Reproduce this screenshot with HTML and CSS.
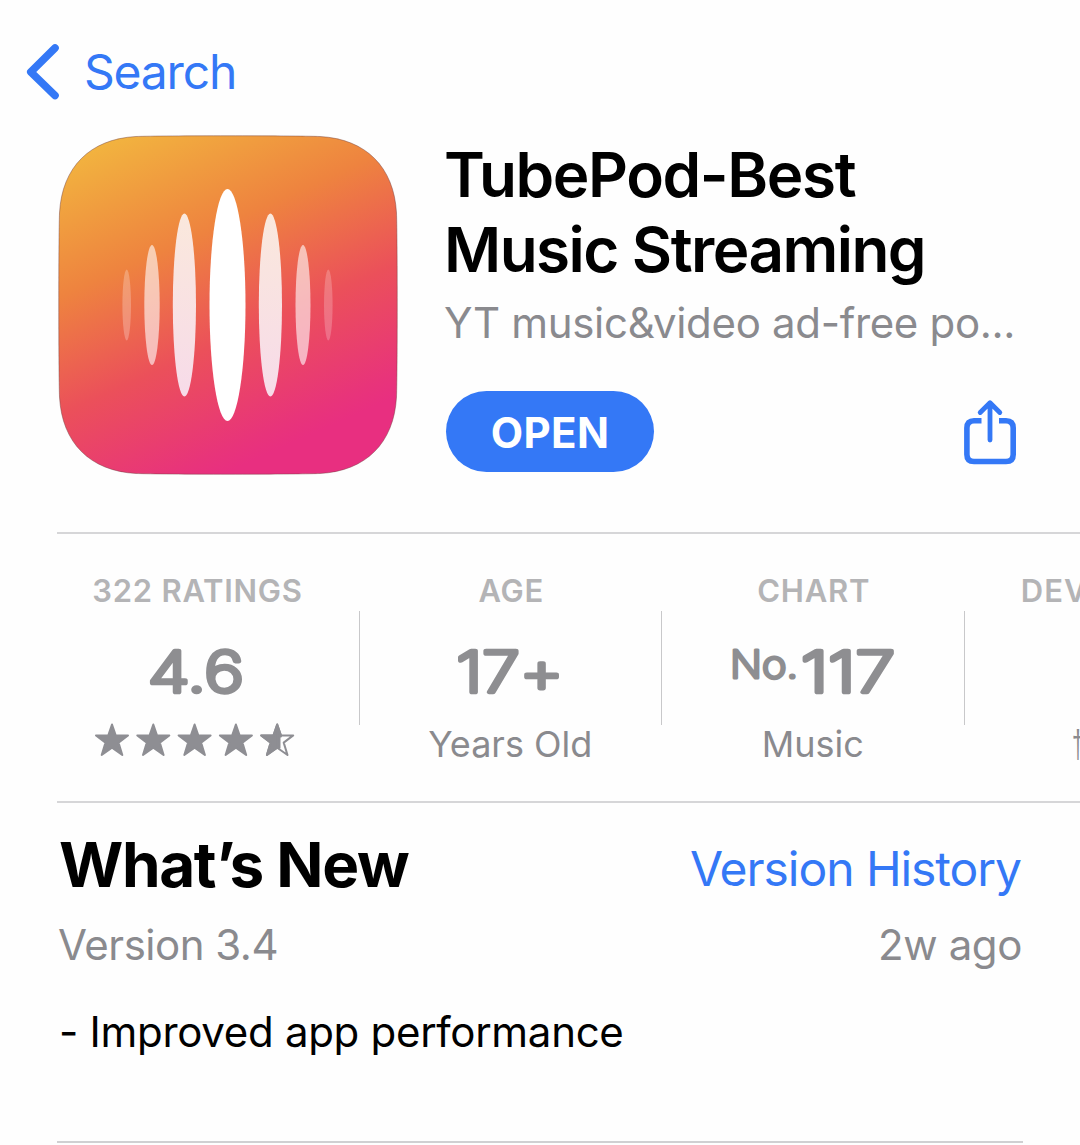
FILE: index.html
```html
<!DOCTYPE html>
<html lang="en">
<head>
<meta charset="utf-8">
<title>TubePod-Best Music Streaming</title>
<link rel="stylesheet" href="styles.css">
</head>
<body>
<nav class="nav">
  <svg class="chevron" width="36" height="58" viewBox="0 0 36 58"><path d="M30 6 5.800 30 30 53.500" fill="none" stroke="#3478f6" stroke-width="7.600" stroke-linecap="round" stroke-linejoin="round"/></svg>
  <a class="back">Search</a>
</nav>
<header class="app">
  <svg class="app-icon" width="340" height="340" viewBox="0 0 340 340">
    <defs>
      <linearGradient id="bg" gradientUnits="userSpaceOnUse" x1="40" y1="5" x2="185" y2="330">
        <stop offset="0" stop-color="#f2b53f"/>
        <stop offset=".36" stop-color="#ee833f"/>
        <stop offset=".66" stop-color="#eb505a"/>
        <stop offset=".94" stop-color="#e8347a"/>
        <stop offset="1" stop-color="#e82f80"/>
      </linearGradient>
      <linearGradient id="bar" x1="0" y1="0" x2="0" y2="1">
        <stop offset="0" stop-color="#fae8dc"/>
        <stop offset="1" stop-color="#f7dbe9"/>
      </linearGradient>
    </defs>
    <path d="M78 1.500C105 .5 235 .5 262 1.500C308 4 336 32 338.500 78C339.500 105 339.500 235 338.500 262C336 308 308 336 262 338.500C235 339.500 105 339.500 78 338.500C32 336 4 308 1.500 262C.5 235 .5 105 1.500 78C4 32 32 4 78 1.500Z" fill="url(#bg)" stroke="#703f3f" stroke-opacity=".45"/>
    <g fill="#fff">
      <ellipse cx="68.700" cy="170" rx="4.300" ry="35.500" opacity=".25"/>
      <ellipse cx="94" cy="170" rx="7.700" ry="60" opacity=".6"/>
      <ellipse cx="270.300" cy="170" rx="4.300" ry="35.500" opacity=".22"/>
      <ellipse cx="245" cy="170" rx="7.500" ry="60" opacity=".6"/>
      <ellipse cx="169.500" cy="170" rx="18" ry="116"/>
    </g>
    <ellipse cx="126.400" cy="170" rx="11.600" ry="91.500" fill="url(#bar)"/>
    <ellipse cx="212.400" cy="170" rx="11.600" ry="91.500" fill="url(#bar)"/>
  </svg>
  <div class="info">
    <h1 class="title"><span class="t1">TubePod-Best</span><br><span class="t2">Music Streaming</span></h1>
    <p class="subtitle">YT music&amp;video ad-free po...</p>
    <div class="actions">
      <button class="open">OPEN</button>
      <svg width="54" height="68" viewBox="0 0 54 68" fill="none" stroke="#3478f6" stroke-width="5.600"><path d="M18.500 21.700H11Q3.900 21.700 3.900 29V55.500Q3.900 62.500 11 62.500H43Q50.200 62.500 50.200 55.500V29Q50.200 21.700 43 21.700H36"/><path d="M27 41V5M17.200 13.500 27 3.800 36.800 13.500" stroke-width="4.800" stroke-linecap="round" stroke-linejoin="round"/></svg>
    </div>
  </div>
</header>
<section class="stats">
  <div class="cells">
    <div class="cell">
      <div class="label">322 RATINGS</div>
      <svg class="value" width="200" height="70"><text class="big" x="98" y="52.500" textLength="96" lengthAdjust="spacingAndGlyphs">4.6</text></svg>
      <svg class="stars" width="202" height="36" viewBox="0 0 202 36" fill="#8e8e93" stroke="#8e8e93" stroke-width="2" stroke-linejoin="round">
        <defs><path id="star" d="M18 2.500 21.700 13.400H34L24.500 20.600 28.300 33 18 25.800 7.700 33 11.500 20.600 2 13.400H14.300Z"/></defs>
        <use href="#star"/><use href="#star" x="41.300"/><use href="#star" x="82.600"/><use href="#star" x="123.900"/>
        <use href="#star" x="165.200" fill="none"/>
        <path d="M183.200 2.500V25.800L172.900 33 176.700 20.600 167.200 13.400H179.500ZM183.200 2.500 186.900 13.400V14.500H185.500V25.800H183.200Z"/>
      </svg>
    </div>
    <div class="cell">
      <div class="label">AGE</div>
      <svg class="value" width="200" height="70"><text class="big" x="99" y="52.500" textLength="107" lengthAdjust="spacingAndGlyphs">17<tspan dy="4">+</tspan></text></svg>
      <div class="caption years">Years Old</div>
    </div>
    <div class="cell">
      <div class="label">CHART</div>
      <svg class="value" width="200" height="70"><text class="no" x="50" y="38.500" textLength="68" lengthAdjust="spacingAndGlyphs">No.</text><text class="big" x="134" y="52.500" textLength="94" lengthAdjust="spacingAndGlyphs">117</text></svg>
      <div class="caption music">Music</div>
    </div>
    <div class="cell">
      <div class="label developer">DEVELOPER</div>
      <div class="value"></div>
      <div class="caption dev">†</div>
    </div>
  </div>
</section>
<section class="news">
  <div class="row heading"><h2 class="whats">What’s New</h2><a class="history">Version History</a></div>
  <div class="row meta"><span class="version">Version 3.4</span><span class="ago">2w ago</span></div>
  <p class="notes">- Improved app performance</p>
</section>
</body>
</html>
```
FILE: styles.css
```css
* { box-sizing: border-box; }
body { margin: 0; width: 1080px; height: 1145px; overflow: hidden; background: #fefefe; color: #000; font-family: Inter, "Liberation Sans", sans-serif; }
h1, h2, p { margin: 0; }
.nav { display: flex; height: 135px; padding: 42px 0 0 25px; }
.back { margin-left: 23px; font-size: 48px; line-height: 60px; letter-spacing: -1.2px; color: #3478f6; }
.app { display: flex; height: 397px; padding-left: 58px; }
.app-icon { flex: none; }
.info { width: 573px; margin-left: 46px; padding-top: 2px; }
.title { font-size: 62px; line-height: 75px; font-weight: 600; white-space: nowrap; }
.t1 { letter-spacing: -1.4px; }
.t2 { letter-spacing: -1.55px; }
.subtitle { margin-top: 11px; font-size: 42px; line-height: 50px; letter-spacing: -.32px; color: #8a8a8e; white-space: nowrap; }
.actions { display: flex; justify-content: space-between; margin-top: 43px; padding-left: 2px; }
.actions svg { margin-top: 8px; }
.open { width: 208px; height: 81px; padding: 0; border: 0; border-radius: 41px; background: #3478f6; color: #fff; font: 700 42px/83px Inter, sans-serif; letter-spacing: .4px; }
.stats { height: 271px; margin-left: 57px; border-top: 2px solid #d6d6d8; border-bottom: 2px solid #d6d6d8; overflow: hidden; }
.cells { display: grid; grid-template-columns: 325px 302.5px 302.5px 302.5px; margin-left: -22px; height: 267px; background: linear-gradient(#c8c8ca, #c8c8ca) 324px 77px / 1px 114px no-repeat, linear-gradient(#c8c8ca, #c8c8ca) 626px 77px / 1px 114px no-repeat, linear-gradient(#c8c8ca, #c8c8ca) 929px 77px / 1px 114px no-repeat; }
.cell { display: flex; flex-direction: column; align-items: center; padding-top: 37px; color: #8a8a8e; }
.label { font-size: 31px; line-height: 40px; font-weight: 600; color: #b4b4b6; letter-spacing: .75px; }
.developer { letter-spacing: 1px; }
.value { height: 70px; margin-top: 28px; }
.big, .no { fill: #8e8e91; stroke: #8e8e91; stroke-width: 4.6px; stroke-linejoin: round; text-anchor: middle; font-weight: 200; font-size: 56.5px; }
.no { font-size: 38px; stroke-width: 3.2px; }
.caption { font-size: 36px; line-height: 44px; margin-top: 13px; }
.years, .music { margin-left: -2px; }
.stars { margin: 13px 6px 0 0; }
.dev { width: 80px; margin-left: -8px; font-family: "Liberation Sans", sans-serif; font-size: 39px; transform: scaleX(.55); transform-origin: left; }
.news { height: 340px; margin-left: 57px; width: 966px; border-bottom: 2px solid #d0d0d2; padding: 27px 2px 0 2px; }
.row { display: flex; justify-content: space-between; white-space: nowrap; }
.whats { font-size: 62px; line-height: 70px; font-weight: 700; letter-spacing: -1.35px; }
.history { font-size: 48px; line-height: 60px; color: #3478f6; padding-top: 9px; letter-spacing: -1.05px; }
.meta { font-size: 42px; line-height: 50px; margin: 20px -1px 0 -1px; color: #8a8a8e; }
.version { letter-spacing: -.5px; }
.ago { letter-spacing: -.4px; }
.notes { margin-top: 37px; font-size: 42px; line-height: 50px; letter-spacing: -.3px; }
```
